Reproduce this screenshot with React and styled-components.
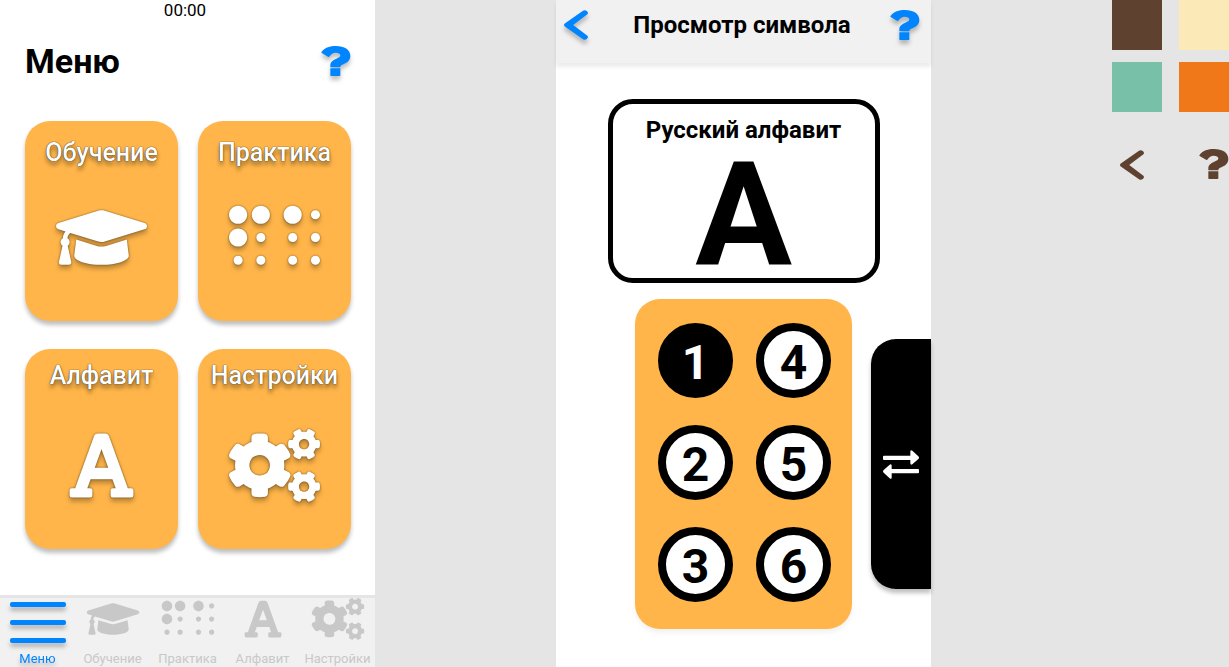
import React from "react";
import styled, { createGlobalStyle } from "styled-components";
import { FaGraduationCap, FaBraille, FaFont, FaCogs } from "react-icons/fa";

const GlobalStyle = createGlobalStyle`
  *, *::before, *::after { box-sizing: border-box; }
  body {
    margin: 0;
    background: #e5e5e5;
    color: #000;
    font-family: Roboto, "Liberation Sans", sans-serif;
  }
  h1, h2, p { margin: 0; }
  button { border: 0; padding: 0; background: none; color: inherit; font: inherit; cursor: pointer; }
  svg { display: block; }
`;

const Board = styled.div`
  display: grid;
  grid-template-columns: 375fr 375fr 117fr;
  column-gap: 181px;
  min-height: 100vh;
  overflow: hidden;
`;

const Screen = styled.section`
  display: flex;
  flex-direction: column;
  min-width: 0;
  background: #fff;
`;

const Clock = styled.p`
  padding-right: 5px;
  font-size: 17px;
  line-height: 20px;
  text-align: center;
`;

const MenuHeader = styled.header`
  display: flex;
  align-items: center;
  justify-content: space-between;
  padding: 19px 24px 0 25px;
`;

const MenuTitle = styled.h1`
  font-size: 34px;
  line-height: 44px;
  font-weight: 700;
`;

const IconButton = styled.button`
  width: 30px;
  color: ${(p) => (p.$muted ? "#5e412f" : "#0085ff")};
  filter: ${(p) => (p.$muted ? "none" : "drop-shadow(0 4px 2px rgba(0, 0, 0, 0.25))")};
`;

const Tiles = styled.main`
  display: grid;
  gap: 28px;
  padding: 38px 24px 0 25px;
`;

const TileRow = styled.div`
  display: grid;
  grid-template-columns: 1fr 1fr;
  gap: 20px;
`;

const Tile = styled.button`
  display: flex;
  flex-direction: column;
  align-items: center;
  height: 200px;
  border-radius: 25px;
  background: #ffb549;
  color: #fff;
  box-shadow: 0 4px 4px rgba(0, 0, 0, 0.25);

  svg {
    width: 91px;
    height: 73px;
    overflow: visible;
    filter: drop-shadow(0 0 1px rgba(0, 0, 0, 0.5)) drop-shadow(0 4px 2px rgba(0, 0, 0, 0.25));
  }
`;

const TileTitle = styled.span`
  height: 80px;
  padding-top: ${(p) => (p.$raised ? 12 : 17)}px;
  font-size: 25px;
  line-height: 30px;
  font-weight: 500;
  text-shadow: 0 0 1px rgba(0, 0, 0, 0.7), 0 0 1px rgba(0, 0, 0, 0.5), 0 4px 4px rgba(0, 0, 0, 0.4);
`;

const TabBar = styled.nav`
  display: grid;
  grid-template-columns: repeat(5, 1fr);
  height: 72px;
  margin-top: auto;
  border-top: 3px solid #e5e5e5;
  background: #f1f1f1;
`;

const Tab = styled.button`
  display: flex;
  flex-direction: column;
  align-items: center;
  min-width: 0;
  color: ${(p) => (p.$active ? "#0085ff" : "#c8c8c8")};
  filter: ${(p) => (p.$active ? "drop-shadow(0 4px 2px rgba(0, 0, 0, 0.25))" : "none")};
  font-size: 13px;
  line-height: 16px;

  svg {
    width: 56px;
    height: 42px;
    margin-bottom: 11px;
    overflow: visible;
  }
`;

const ViewHeader = styled.header`
  display: flex;
  justify-content: space-between;
  align-items: center;
  height: 63px;
  padding: 0 11px 13px 8px;
  background: #f1f1f1;
  box-shadow: 0 4px 4px rgba(0, 0, 0, 0.08);
`;

const ViewTitle = styled.h1`
  font-size: 24px;
  line-height: 28px;
  font-weight: 700;
`;

const SymbolCard = styled.article`
  align-self: center;
  width: 272px;
  height: 184px;
  margin-top: 36px;
  padding-top: 12px;
  border: 5px solid #000;
  border-radius: 25px;
  text-align: center;
`;

const SymbolGroup = styled.h2`
  font-size: 24px;
  line-height: 28px;
  font-weight: 700;
`;

const SymbolLetter = styled.p`
  font-size: 144px;
  line-height: 144px;
  font-weight: 700;
`;

const CellArea = styled.div`
  display: flex;
  justify-content: flex-end;
  align-items: center;
  gap: 19px;
  margin-top: 16px;
`;

const BrailleCell = styled.div`
  display: grid;
  grid-template-columns: 75px 75px;
  grid-auto-flow: column;
  grid-template-rows: repeat(3, 75px);
  gap: 27px 23px;
  padding: 24px 21px 27px 23px;
  border-radius: 25px;
  background: #ffb549;
  box-shadow: 0 4px 4px rgba(0, 0, 0, 0.05);
`;

const Dot = styled.button`
  padding-top: 4px;
  border: 8px solid #000;
  border-radius: 50%;
  background: ${(p) => (p.$raised ? "#000" : "#fff")};
  color: ${(p) => (p.$raised ? "#fff" : "#000")};
  font-size: 48px;
  line-height: 56px;
  font-weight: 700;
`;

const SwapButton = styled.button`
  display: grid;
  place-items: center;
  width: 60px;
  height: 250px;
  border-radius: 25px 0 0 25px;
  background: #000;
  color: #fff;
  box-shadow: 0 4px 4px rgba(0, 0, 0, 0.25);
`;

const Palette = styled.aside`
  min-width: 0;
`;

const Swatches = styled.div`
  display: grid;
  grid-template-columns: 50px 50px;
  gap: 12px 17px;
`;

const Swatch = styled.div`
  height: 50px;
  background: ${(p) => p.$color};
`;

const PaletteIcons = styled.div`
  display: flex;
  gap: 50px;
  padding: 37px 0 0 8px;
`;

const QuestionIcon = () => (
  <svg width="30" height="31" viewBox="0 0 90 93" fill="currentColor" aria-hidden="true">
    <path d="M2 17C12 5 27 0 45 0C70 0 88 11 88 30C88 43 79 49 69 54C60 58 58 59 58 64H28V57C28 47 37 42 46 38C54 35 58 33 58 28C58 23 52 20 44 20C36 20 31 24 26 31Q24 34 21 32L2 21Q0 19 2 17Z" />
    <path d="M28 67H58V88Q58 90 56 90H30Q28 90 28 88Z" />
  </svg>
);

const BackIcon = () => (
  <svg width="24" height="30" viewBox="0 0 24 30" fill="currentColor" aria-hidden="true">
    <path d="M19 .8Q21 -.4 22.8 1Q24.8 2.6 23.4 4.2L9.2 15L23.4 25.8Q24.8 27.4 22.8 29Q21 30.4 19 29.2L.8 16.6Q-.8 15 .8 13.4Z" />
  </svg>
);

const SwapIcon = () => (
  <svg width="36" height="29" viewBox="0 0 108 87" fill="currentColor" aria-hidden="true">
    <path d="M3 17H82V4Q83 -2 88 2L106 19Q110 23 106 27L88 43Q83 46 82 40V30H3Q0 30 0 27V20Q0 17 3 17Z" />
    <path d="M105 70H26V83Q25 89 20 85L2 68Q-2 64 2 60L20 44Q25 41 26 47V57H105Q108 57 108 60V67Q108 70 105 70Z" />
  </svg>
);

const MenuIcon = () => (
  <svg viewBox="0 0 56 42" fill="currentColor" aria-hidden="true">
    <rect y="4" width="56" height="5" rx="2" />
    <rect y="22" width="56" height="5" rx="2" />
    <rect y="40" width="56" height="5" rx="2" />
  </svg>
);

const sections = [
  { name: "Обучение", Icon: FaGraduationCap },
  { name: "Практика", Icon: FaBraille },
  { name: "Алфавит", Icon: FaFont },
  { name: "Настройки", Icon: FaCogs },
];

const colors = ["#5e412f", "#fce9b8", "#78c0a8", "#f07818"];

function TilePair({ items, raised }) {
  return (
    <TileRow>
      {items.map(({ name, Icon }) => (
        <Tile key={name} type="button">
          <TileTitle $raised={raised}>{name}</TileTitle>
          <Icon />
        </Tile>
      ))}
    </TileRow>
  );
}

function MenuScreen() {
  return (
    <Screen>
      <Clock>00:00</Clock>
      <MenuHeader>
        <MenuTitle>Меню</MenuTitle>
        <IconButton type="button" aria-label="Помощь">
          <QuestionIcon />
        </IconButton>
      </MenuHeader>
      <Tiles>
        <TilePair items={sections.slice(0, 2)} />
        <TilePair items={sections.slice(2)} raised />
      </Tiles>
      <TabBar>
        <Tab type="button" $active>
          <MenuIcon />
          Меню
        </Tab>
        {sections.map(({ name, Icon }) => (
          <Tab key={name} type="button">
            <Icon />
            {name}
          </Tab>
        ))}
      </TabBar>
    </Screen>
  );
}

function SymbolScreen() {
  return (
    <Screen>
      <ViewHeader>
        <IconButton type="button" aria-label="Назад">
          <BackIcon />
        </IconButton>
        <ViewTitle>Просмотр символа</ViewTitle>
        <IconButton type="button" aria-label="Помощь">
          <QuestionIcon />
        </IconButton>
      </ViewHeader>
      <SymbolCard>
        <SymbolGroup>Русский алфавит</SymbolGroup>
        <SymbolLetter>А</SymbolLetter>
      </SymbolCard>
      <CellArea>
        <BrailleCell>
          {[1, 2, 3, 4, 5, 6].map((n) => (
            <Dot key={n} type="button" $raised={n === 1}>
              {n}
            </Dot>
          ))}
        </BrailleCell>
        <SwapButton type="button" aria-label="Переключить">
          <SwapIcon />
        </SwapButton>
      </CellArea>
    </Screen>
  );
}

export default function App() {
  return (
    <>
      <GlobalStyle />
      <Board>
        <MenuScreen />
        <SymbolScreen />
        <Palette>
          <Swatches>
            {colors.map((color) => (
              <Swatch key={color} $color={color} />
            ))}
          </Swatches>
          <PaletteIcons>
            <IconButton type="button" $muted aria-label="Назад">
              <BackIcon />
            </IconButton>
            <IconButton type="button" $muted aria-label="Помощь">
              <QuestionIcon />
            </IconButton>
          </PaletteIcons>
        </Palette>
      </Board>
    </>
  );
}
